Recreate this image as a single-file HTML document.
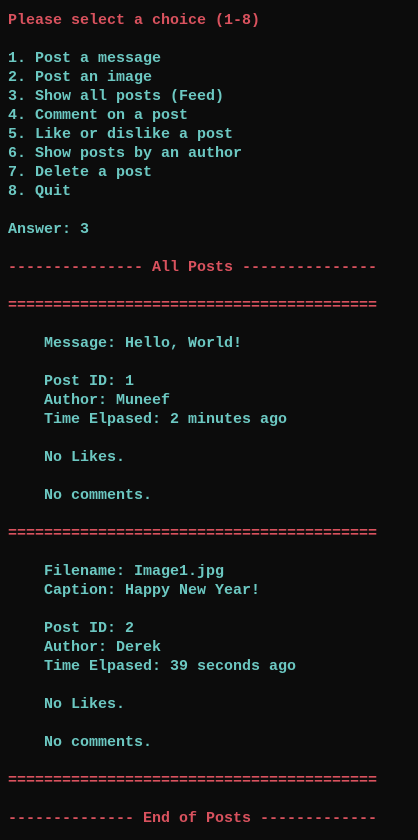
<!DOCTYPE html>
<html><head><style>
html,body{margin:0;padding:0;background:#0c0c0c;width:418px;height:840px;overflow:hidden}
pre{margin:0;padding:11px 0 0 8px;font-family:"Liberation Mono",monospace;font-size:15px;line-height:19px;color:#6cc8c2;font-weight:bold}
.r{color:#d9525e}
</style></head><body><pre><span class="r">Please select a choice (1-8)</span>

1. Post a message
2. Post an image
3. Show all posts (Feed)
4. Comment on a post
5. Like or dislike a post
6. Show posts by an author
7. Delete a post
8. Quit

Answer: 3

<span class="r">--------------- All Posts ---------------</span>

<span class="r">=========================================</span>

    Message: Hello, World!

    Post ID: 1
    Author: Muneef
    Time Elpased: 2 minutes ago

    No Likes.

    No comments.

<span class="r">=========================================</span>

    Filename: Image1.jpg
    Caption: Happy New Year!

    Post ID: 2
    Author: Derek
    Time Elpased: 39 seconds ago

    No Likes.

    No comments.

<span class="r">=========================================</span>

<span class="r">-------------- End of Posts -------------</span>
</pre></body></html>
